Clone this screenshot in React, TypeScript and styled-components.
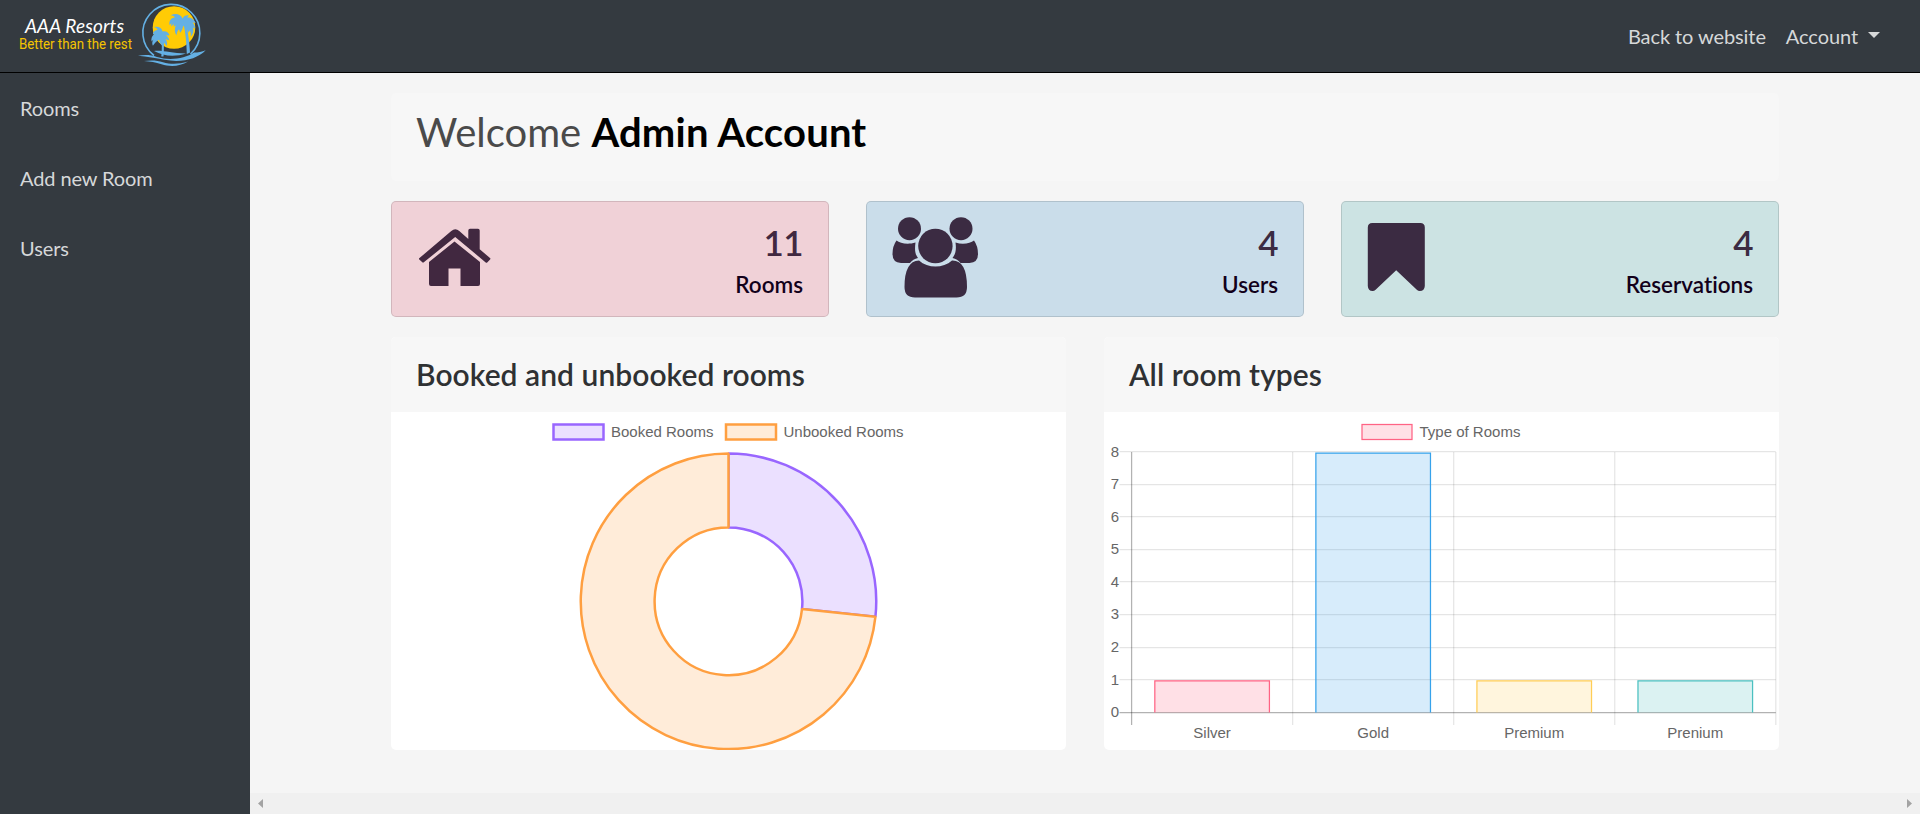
import React from "react";
import styled, { createGlobalStyle } from "styled-components";

const GlobalStyle = createGlobalStyle`
  *, *::before, *::after { box-sizing: border-box; }
  html, body { margin: 0; height: 100%; overflow: hidden; }
  body {
    font-family: Lato, "Liberation Sans", sans-serif;
    font-variant-ligatures: none;
    background: #f5f5f5;
    color: #212529;
  }
  a { color: inherit; text-decoration: none; }
`;

const Page = styled.div`
  display: flex;
  flex-direction: column;
  height: 100vh;
`;

const Navbar = styled.header`
  flex: none;
  display: flex;
  justify-content: space-between;
  align-items: center;
  height: 73px;
  padding-right: 40px;
  background: #343a40;
  border-bottom: 1px solid #000;
`;

const NavLinks = styled.nav`
  display: flex;
  gap: 20px;
  font-size: 20px;
  letter-spacing: -0.08px;
  line-height: 30px;
  color: #d6d8d9;
`;

const NavLink = styled.a`
  display: flex;
  align-items: center;
`;

const Caret = styled.span`
  margin: 0 0 2px 10px;
  border: 6px solid transparent;
  border-top-color: currentColor;
  border-bottom: 0;
`;

const Body = styled.div`
  flex: 1;
  display: flex;
  min-height: 0;
`;

const Sidebar = styled.aside`
  flex: none;
  display: flex;
  flex-direction: column;
  gap: 40px;
  width: 250px;
  padding: 20px;
  background: #343a40;
  color: #d6d8d9;
  font-size: 20px;
  letter-spacing: -0.1px;
  line-height: 30px;
`;

const Main = styled.main`
  flex: 1;
  display: flex;
  flex-direction: column;
  justify-content: space-between;
  min-width: 0;
`;

const Content = styled.div`
  display: flex;
  flex-direction: column;
  gap: 20px;
  width: 1388px;
  margin: 20px 0 0 141px;
`;

const Welcome = styled.section`
  height: 88px;
  padding: 14px 25px;
  border-radius: 5px;
  background: #f7f7f7;
`;

const Title = styled.h1`
  margin: 0;
  font-size: 40px;
  font-weight: 400;
  line-height: 50px;
  color: #4a4a4a;
  strong { font-weight: 700; color: #000; letter-spacing: 0.2px; }
`;

const Row = styled.div`
  display: flex;
  justify-content: space-between;
`;

const StatCard = styled.article<{ $bg: string }>`
  display: flex;
  justify-content: space-between;
  width: 438px;
  height: 116px;
  padding: 0 25px;
  border: 1px solid rgba(0, 0, 0, 0.125);
  border-radius: 5px;
  background: ${(p) => p.$bg};
`;

const StatText = styled.div`
  display: flex;
  flex-direction: column;
  align-items: flex-end;
  padding-top: 18px;
`;

const StatValue = styled.span<{ $color: string }>`
  font-size: 35px;
  line-height: 44px;
  font-weight: 600;
  letter-spacing: -0.6px;
  color: ${(p) => p.$color};
`;

const StatLabel = styled.span`
  margin-top: 2px;
  font-size: 22.5px;
  line-height: 38px;
  font-weight: 600;
  color: #12001a;
`;

const Glyph = styled.svg`
  display: block;
`;

const ChartCard = styled.article`
  width: 675px;
  border-radius: 5px;
  overflow: hidden;
  background: #fff;
`;

const ChartHead = styled.h2`
  margin: 0;
  height: 75px;
  padding: 19px 25px;
  background: #f7f7f7;
  font-size: 30px;
  letter-spacing: 0.04px;
  line-height: 36px;
  font-weight: 600;
  color: #2f3133;
`;

const Canvas = styled.svg`
  display: block;
  font: 15px "Liberation Sans", Arial, sans-serif;
  fill: #666;
`;

const Scrollbar = styled.div`
  display: flex;
  justify-content: space-between;
  align-items: center;
  height: 21px;
  padding: 0 8px;
  background: #f0f0f0;
`;

const Arrow = styled.svg`
  display: block;
  fill: #a3a3a3;
`;

function Logo() {
  return (
    <svg width="220" height="72" viewBox="0 0 220 72">
      <text x="25" y="33" textLength="99" lengthAdjust="spacing" fill="#fff" fontFamily="Lato, sans-serif" fontSize="19" fontStyle="italic">AAA Resorts</text>
      <text x="19" y="49" textLength="113" lengthAdjust="spacingAndGlyphs" fill="#f5c400" fontFamily="Roboto, sans-serif" fontSize="14.500">Better than the rest</text>
      <circle cx="174" cy="27.500" r="21.300" fill="#ffcb05" />
      <path d="M154 55.500A28.500 28.500 0 1 1 190.500 54" fill="none" stroke="#64b0e4" strokeWidth="1.600" />
      <g fill="#64b0e4">
        <path d="M183.500 24c2 9 3 18 3.300 30l3.200-1.500c-.6-11-1.800-19-4-28.500z" />
        <path d="M161.300 37c.8 6 .6 13 0 19.500h2.200c.6-7 .5-13-.3-19.500z" />
        <path d="M182.500 18.500c-1.500-4.500-7-5.800-12-3.300 2.500.2 3.800.8 4.300 2.300-4 .5-6 3.500-5.300 7.500l2-1.800-.5 3.300 2.800-2.500-.2 2.800 2.200-1.500c-1.500 3.500-1.300 7.500.8 10 .3-3 1-5 2.500-6l1 3.500c1.800-2 2.800-4.500 3.200-7 2.500 1.500 4 4 4.700 7l1.800-2.300c1 2 1.300 4 .8 6.300 2.700-2.500 3.400-6 2.400-9.300l2 1c0-2.300-.8-4.300-2.300-6l3 .5c-1.500-4-5-6-8.500-5.500l1.800-2.200c-3-.6-5.400.6-6.500 3.200z" />
        <path d="M162.500 31.500c-.5-3.800-4-5.500-8.500-4.500 2.200.5 3.200 1.500 3.500 3-3.200.2-4.800 2-4.600 4.600l2-1c-2.800 2.200-4 4.800-3.400 7.800l2-1.800c-1.500 2.200-1.600 4.200-.6 6.200 2-3.200 4-4.800 6.300-6 .2 3.200 1.800 5.500 4.200 6.500l.6-3.500 2.800 3.200c.8-3 .2-5-1.300-7l3.800 1.500c-.3-2.500-1.600-4-3.500-5l3.700-.3c-1.200-3-3.800-4.700-7-3.700z" />
        <path d="M138 55.800c7-1.300 13-.8 19 1.200 13 4 28 1.500 37-4.500 4 0 8-.7 11.700-2.300C197 59 182 63 164.500 59.800c-9-1.600-17-3-26.500-4z" />
        <path d="M154 51c10-.8 17 2.500 32 2.500-11 3.500-22 3-32-2.500z" />
        <path d="M144 61c7-1 13-.8 19 1.200 8 2.300 16 2 25-.7-8 5-18 5.500-26.500 2.700-6-1.800-11-2.700-17.500-3.200z" />
      </g>
    </svg>
  );
}

function HomeIcon() {
  return (
    <Glyph width="110" height="114" viewBox="0 0 110 114" fill="#412840">
      <path d="M2.200 56.300 34.300 28.900q4-3.200 8 0L51.300 37V28.500q0-1.700 1.700-1.700h8q1.700 0 1.700 1.700V47.300L73 56q.8.700.1 1.400l-2.900 3q-.7.700-1.500 0L38.200 35 6.800 60.300q-.8.700-1.500 0l-3-2.700q-.7-.7-.1-1.300z" />
      <path d="M37.500 39.500 63 60v22q0 2-2 2H43.500V66.500h-12V84H14q-2 0-2-2V60z" />
    </Glyph>
  );
}

function UsersIcon() {
  return (
    <Glyph width="110" height="114" viewBox="0 0 110 114" fill="#3b2b42">
      <circle cx="17.500" cy="26.700" r="11.500" />
      <circle cx="69" cy="26.700" r="11.500" />
      <circle cx="43.400" cy="44" r="17.200" />
      <path d="M4.500 38.500C8 41 15 43 23.500 40.500 22.500 48 23 52 26 56q-5 1-8 5H9Q.5 60.500.5 52 .5 44 4.500 38.500z" />
      <path d="M82 38.500C78.500 41 71.500 43 63.500 40.500 64.500 48 63.500 52 60.500 56q5 1 8 5h9q8.500-.5 8.500-9 0-8-4-13.500z" />
      <path d="M27 58.500C36 66.500 51 66.500 60 58.500Q75 58 75 85 75 95.500 64.500 95.500H23Q12.500 95.500 12.500 85 12.500 59 27 58.500z" />
    </Glyph>
  );
}

function BookmarkIcon() {
  return (
    <Glyph width="110" height="114" viewBox="0 0 110 114" fill="#3b2b42">
      <path d="M5.300 21h48q4.500 0 4.500 4.500V84q-.3 5-5 5-1.700 0-3-1.200L29.200 68.300 8.600 87.800q-1.300 1.200-3 1.200-4.500 0-4.800-5V25.500Q.8 21 5.300 21z" />
    </Glyph>
  );
}

const stats = [
  { label: "Rooms", value: 11, bg: "#f0d1d7", color: "#412840", Icon: HomeIcon },
  { label: "Users", value: 4, bg: "#caddea", color: "#3b2b42", Icon: UsersIcon },
  { label: "Reservations", value: 4, bg: "#cce3e3", color: "#3b2b42", Icon: BookmarkIcon },
];

const CX = 337.5;
const CY = 189.3;
const OUTER = 147.75;
const INNER = 73.9;

const slice = (from: number, to: number) => {
  const at = (r: number, turn: number) => {
    const a = turn * 2 * Math.PI - Math.PI / 2;
    return `${CX + r * Math.cos(a)} ${CY + r * Math.sin(a)}`;
  };
  const large = to - from > 0.5 ? 1 : 0;
  return `M${at(OUTER, from)}A${OUTER} ${OUTER} 0 ${large} 1 ${at(OUTER, to)}L${at(INNER, to)}A${INNER} ${INNER} 0 ${large} 0 ${at(INNER, from)}Z`;
};

function Doughnut() {
  return (
    <Canvas width="675" height="338">
      <rect x="162.500" y="12.500" width="50" height="15" fill="#ebe0ff" stroke="#9966ff" strokeWidth="2.500" />
      <text x="220" y="25">Booked Rooms</text>
      <rect x="335" y="12.500" width="50" height="15" fill="#ffecd9" stroke="#ff9f40" strokeWidth="2.500" />
      <text x="392.500" y="25">Unbooked Rooms</text>
      <path d={slice(0, 4 / 15)} fill="#ebe0ff" stroke="#9966ff" strokeWidth="2.500" strokeLinejoin="bevel" />
      <path d={slice(4 / 15, 1)} fill="#ffecd9" stroke="#ff9f40" strokeWidth="2.500" strokeLinejoin="bevel" />
    </Canvas>
  );
}

const bars = [
  { label: "Silver", value: 1, rgb: "255,99,132" },
  { label: "Gold", value: 8, rgb: "54,162,235" },
  { label: "Premium", value: 1, rgb: "255,205,86" },
  { label: "Prenium", value: 1, rgb: "75,192,192" },
];
const LEFT = 27.6;
const STEP = 161.05;
const BASE = 300.6;
const UNIT = 32.55;

function BarChart() {
  const right = LEFT + STEP * 4;
  return (
    <Canvas width="675" height="338">
      <rect x="258" y="12.500" width="50" height="15" fill="rgba(255,99,132,.2)" stroke="rgb(255,99,132)" strokeWidth="1.250" />
      <text x="315.500" y="25">Type of Rooms</text>
      {Array.from({ length: 9 }, (_, n) => {
        const y = Math.round(BASE - n * UNIT) - 0.3;
        return (
          <g key={n}>
            <line x1="15.500" x2={right} y1={y} y2={y} stroke={n ? "rgba(0,0,0,.1)" : "rgba(0,0,0,.3)"} strokeWidth="1.250" />
            <text x="15" y={BASE - n * UNIT + 4.5} textAnchor="end">{n}</text>
          </g>
        );
      })}
      {[0, 1, 2, 3, 4].map((n) => (
        <line key={n} x1={LEFT + n * STEP} x2={LEFT + n * STEP} y1="40" y2="313" stroke={n ? "rgba(0,0,0,.1)" : "rgba(0,0,0,.3)"} strokeWidth="1.250" />
      ))}
      {bars.map((b, i) => {
        const mid = LEFT + STEP * (i + 0.5);
        const l = mid - 57.3;
        const r = mid + 57.3;
        const top = BASE - b.value * UNIT + 0.8;
        return (
          <g key={b.label}>
            <rect x={l} y={top} width={r - l} height={BASE - top} fill={`rgba(${b.rgb},.2)`} />
            <path d={`M${l} ${BASE}V${top}H${r}V${BASE}`} fill="none" stroke={`rgb(${b.rgb})`} strokeWidth="1.250" />
            <text x={mid} y="326" textAnchor="middle">{b.label}</text>
          </g>
        );
      })}
    </Canvas>
  );
}

export default function App() {
  return (
    <Page>
      <GlobalStyle />
      <Navbar>
        <Logo />
        <NavLinks>
          <NavLink href="#">Back to website</NavLink>
          <NavLink href="#">Account<Caret /></NavLink>
        </NavLinks>
      </Navbar>
      <Body>
        <Sidebar>
          <a href="#">Rooms</a>
          <a href="#">Add new Room</a>
          <a href="#">Users</a>
        </Sidebar>
        <Main>
          <Content>
            <Welcome>
              <Title>Welcome <strong>Admin Account</strong></Title>
            </Welcome>
            <Row>
              {stats.map(({ label, value, bg, color, Icon }) => (
                <StatCard key={label} $bg={bg}>
                  <Icon />
                  <StatText>
                    <StatValue $color={color}>{value}</StatValue>
                    <StatLabel>{label}</StatLabel>
                  </StatText>
                </StatCard>
              ))}
            </Row>
            <Row>
              <ChartCard>
                <ChartHead>Booked and unbooked rooms</ChartHead>
                <Doughnut />
              </ChartCard>
              <ChartCard>
                <ChartHead>All room types</ChartHead>
                <BarChart />
              </ChartCard>
            </Row>
          </Content>
          <Scrollbar>
            <Arrow width="5" height="9"><path d="M5 0v9L0 4.500z" /></Arrow>
            <Arrow width="5" height="9"><path d="M0 0v9L5 4.500z" /></Arrow>
          </Scrollbar>
        </Main>
      </Body>
    </Page>
  );
}
